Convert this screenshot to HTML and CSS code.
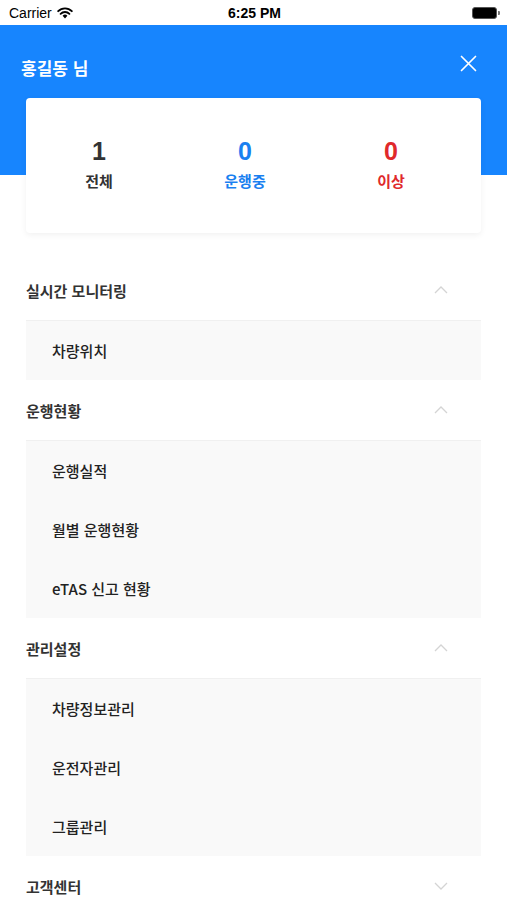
FILE: index.html
```html
<!DOCTYPE html>
<html lang="ko">
<head>
    <meta charset="UTF-8">
    <meta name="viewport" content="width=device-width, initial-scale=1.0">
    <title>메뉴</title>
    <link rel="stylesheet" href="styles.css">
</head>
<body>
    <div class="status-bar">
        <div class="carrier">
            Carrier
            <svg class="wifi" width="16" height="12" viewBox="0 0 16 12">
                <path d="M8 11.5 L5.6 8.8 A3.4 3.4 0 0 1 10.4 8.8 Z" fill="#000"/>
                <path d="M3.6 6.8 A6.2 6.2 0 0 1 12.4 6.8" stroke="#000" stroke-width="1.9" fill="none" stroke-linecap="round"/>
                <path d="M1.2 4.2 A9.6 9.6 0 0 1 14.8 4.2" stroke="#000" stroke-width="1.9" fill="none" stroke-linecap="round"/>
            </svg>
        </div>
        <div class="time">6:25 PM</div>
        <div class="battery">
            <span class="battery-body"></span><span class="battery-tip"></span>
        </div>
    </div>

    <header class="top">
        <h1>홍길동 님</h1>
        <svg class="close" width="17" height="17" viewBox="0 0 17 17">
            <path d="M1.5 1.5 L15.5 15.5 M15.5 1.5 L1.5 15.5" stroke="#fff" stroke-width="1.7" stroke-linecap="round"/>
        </svg>
    </header>

    <div class="summary">
        <div class="stat">
            <span class="num">1</span>
            <span class="label">전체</span>
        </div>
        <div class="stat running">
            <span class="num">0</span>
            <span class="label">운행중</span>
        </div>
        <div class="stat alert">
            <span class="num">0</span>
            <span class="label">이상</span>
        </div>
    </div>

    <nav class="menu">
        <div class="section">
            <div class="section-head">
                <span>실시간 모니터링</span>
                <svg class="chevron" width="14" height="8" viewBox="0 0 14 8"><path d="M1 7 L7 1 L13 7" stroke="#d4d4d4" stroke-width="1.3" fill="none"/></svg>
            </div>
            <ul class="items">
                <li>차량위치</li>
            </ul>
        </div>

        <div class="section">
            <div class="section-head">
                <span>운행현황</span>
                <svg class="chevron" width="14" height="8" viewBox="0 0 14 8"><path d="M1 7 L7 1 L13 7" stroke="#d4d4d4" stroke-width="1.3" fill="none"/></svg>
            </div>
            <ul class="items">
                <li>운행실적</li>
                <li>월별 운행현황</li>
                <li>eTAS 신고 현황</li>
            </ul>
        </div>

        <div class="section">
            <div class="section-head">
                <span>관리설정</span>
                <svg class="chevron" width="14" height="8" viewBox="0 0 14 8"><path d="M1 7 L7 1 L13 7" stroke="#d4d4d4" stroke-width="1.3" fill="none"/></svg>
            </div>
            <ul class="items">
                <li>차량정보관리</li>
                <li>운전자관리</li>
                <li>그룹관리</li>
            </ul>
        </div>

        <div class="section">
            <div class="section-head">
                <span>고객센터</span>
                <svg class="chevron" width="14" height="8" viewBox="0 0 14 8"><path d="M1 1 L7 7 L13 1" stroke="#d4d4d4" stroke-width="1.3" fill="none"/></svg>
            </div>
        </div>
    </nav>
</body>
</html>
```

FILE: styles.css
```css
body {
    margin: 0;
    font-family: "Noto Sans CJK KR", "Noto Sans", sans-serif;
    background: #fff;
    color: #222;
    overflow: hidden;
}

.status-bar {
    height: 25px;
    display: flex;
    align-items: center;
    justify-content: space-between;
    padding: 0 7px 0 9px;
    font-family: "Liberation Sans", Arial, sans-serif;
    font-size: 14px;
    color: #000;
}

.carrier {
    display: flex;
    align-items: center;
    gap: 5px;
    width: 120px;
}

.time {
    font-weight: bold;
    font-size: 14px;
}

.battery {
    width: 120px;
    display: flex;
    justify-content: flex-end;
    align-items: center;
}

.battery-body {
    width: 23px;
    height: 10px;
    background: #000;
    border-radius: 3px;
    border: 1px solid #555;
}

.battery-tip {
    width: 2px;
    height: 4px;
    background: #777;
    border-radius: 0 1px 1px 0;
    margin-left: 1px;
}

.top {
    background: #1785fe;
    height: 150px;
    display: flex;
    justify-content: space-between;
    align-items: flex-start;
    padding: 0 30px 0 21px;
}

.top h1 {
    margin: 30px 0 0;
    font-size: 17px;
    font-weight: bold;
    color: #fff;
    line-height: 26px;
}

.close {
    margin-top: 30px;
}

.summary {
    margin: -77px 26px 0;
    height: 135px;
    background: #fff;
    border-radius: 4px;
    box-shadow: 0 2px 6px rgba(0, 0, 0, 0.06);
    display: grid;
    grid-template-columns: 146px 146px 146px;
    align-content: center;
    position: relative;
}

.stat {
    display: flex;
    flex-direction: column;
    align-items: center;
    color: #333;
    font-weight: bold;
    margin-top: -2px;
}

.stat .num {
    font-family: "Liberation Sans", Arial, sans-serif;
    font-size: 25px;
    line-height: 30px;
}

.stat .label {
    font-size: 15px;
    line-height: 24px;
    margin-top: 3px;
}

.stat.running {
    color: #1a80f0;
}

.stat.alert {
    color: #e0292b;
}

.menu {
    margin: 27px 26px 0;
}

.section-head {
    height: 60px;
    display: flex;
    align-items: center;
    justify-content: space-between;
    padding-right: 33px;
    font-size: 15px;
    font-weight: bold;
    color: #333;
}

.items {
    list-style: none;
    margin: 0;
    padding: 0;
    background: #f9f9f9;
    border-top: 1px solid #f0f0f0;
}

.items li {
    height: 59px;
    display: flex;
    align-items: center;
    padding-left: 26px;
    font-size: 15px;
    font-weight: 500;
    color: #222;
}
```
